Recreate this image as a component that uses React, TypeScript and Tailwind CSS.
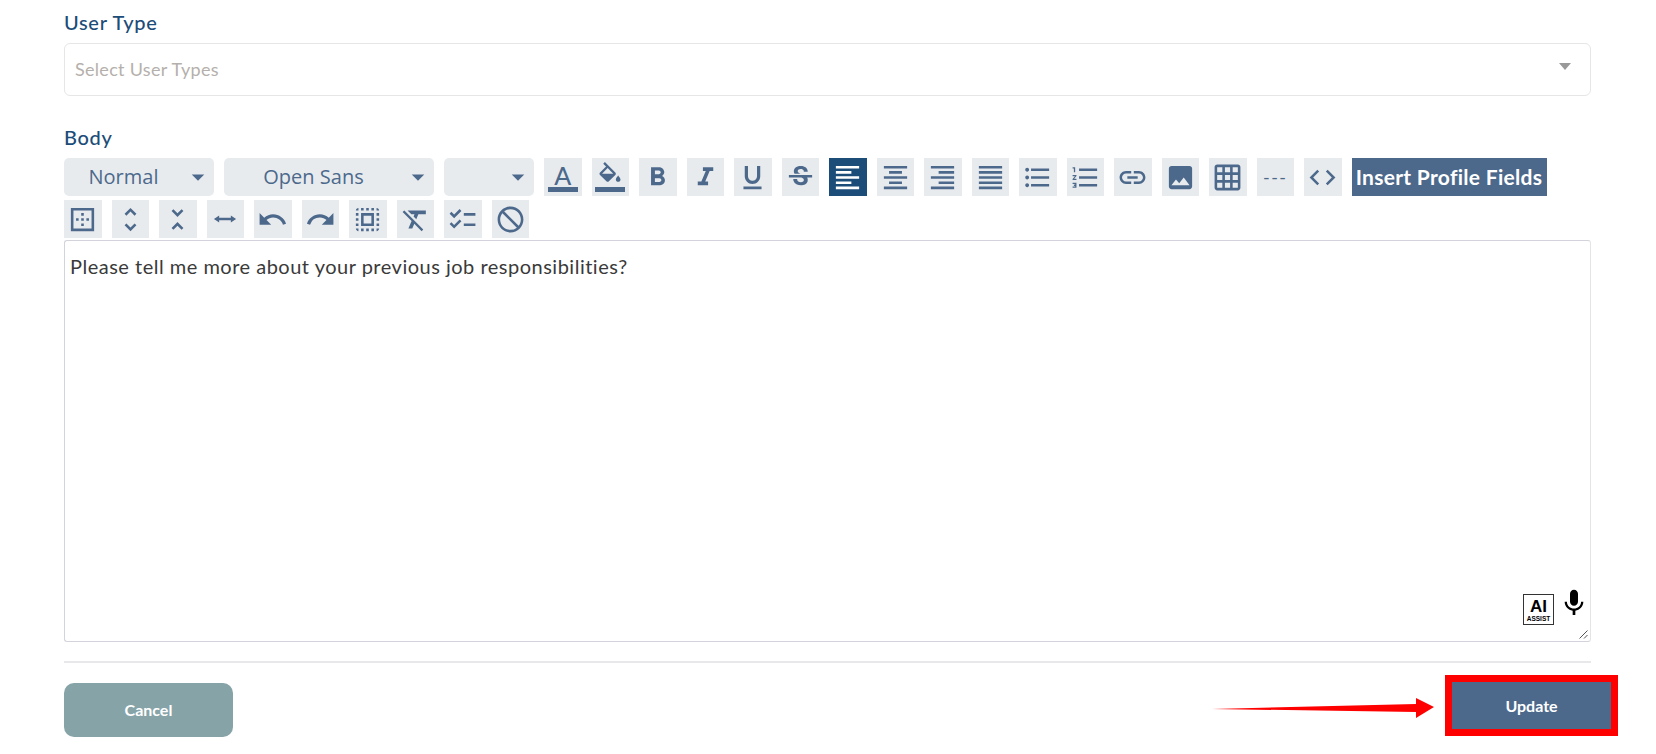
import React from 'react';
import {
    MdArrowDropDown,
    MdFormatBold,
    MdFormatItalic,
    MdFormatUnderlined,
    MdStrikethroughS,
    MdFormatAlignLeft,
    MdFormatAlignCenter,
    MdFormatAlignRight,
    MdFormatAlignJustify,
    MdFormatListBulleted,
    MdFormatListNumbered,
    MdLink,
    MdImage,
    MdGridOn,
    MdCode,
    MdBorderOuter,
    MdUnfoldMore,
    MdUnfoldLess,
    MdUndo,
    MdRedo,
    MdSelectAll,
    MdFormatClear,
    MdChecklist,
    MdDoNotDisturb,
    MdMic,
} from 'react-icons/md';

const font = 'font-["Lato","Noto_Sans",sans-serif]';

function ToolButton({ active, children }: { active?: boolean; children: React.ReactNode }) {
    return (
        <button
            className={
                active
                    ? 'w-[37.5px] h-[38px] bg-[#1c4c78] text-white flex items-center justify-center'
                    : 'w-[37.5px] h-[38px] bg-[#e8ebee] text-[#4c698c] flex items-center justify-center'
            }
        >
            {children}
        </button>
    );
}

function Dropdown({ label, width }: { label?: string; width: string }) {
    return (
        <div className={`${width} h-[38px] bg-[#e8ebee] rounded-[5px] flex items-center text-[#4c698c] text-[20px] font-["Open_Sans",sans-serif]`}>
            <span className="flex-1 text-center">{label}</span>
            <MdArrowDropDown className="w-[30px] h-[30px] mr-[1px] shrink-0" />
        </div>
    );
}

export default function App() {
    const icon = 'w-[31px] h-[31px]';

    return (
        <div className={`relative w-full h-[754px] overflow-hidden bg-white pl-[64px] pr-[65px] ${font}`}>
            <div className="mt-[10px] h-[26px] mb-[7px] leading-[24px] text-[20px] tracking-[0.7px] text-[#1c4c78] font-medium">User Type</div>
            <div className="h-[53px] border border-[#e6e6e6] rounded-[6px] flex items-center justify-between pl-[10px] pr-[19px]">
                <span className="text-[18px] tracking-[0.3px] text-[#b5b0ab]">Select User Types</span>
                <span className="w-0 h-0 border-x-[6px] border-t-[7px] border-x-transparent border-t-[#999] -mt-[6px]" />
            </div>

            <div className="mt-[29px] h-[26px] mb-[7px] leading-[24px] text-[20px] tracking-[0.7px] text-[#1c4c78] font-medium">Body</div>
            <div className="flex flex-wrap gap-x-[10px] gap-y-[4px]">
                <Dropdown label="Normal" width="w-[150px]" />
                <Dropdown label="Open Sans" width="w-[210px]" />
                <Dropdown width="w-[90px]" />
                <ToolButton>
                    <span className="h-[38px] flex flex-col items-center pt-[5px]">
                        <span className="font-medium text-[25px] leading-[24px]">A</span>
                        <span className="block w-[30px] h-[5px] bg-[#4c698c]" />
                    </span>
                </ToolButton>
                <ToolButton>
                    <span className="h-[38px] flex flex-col items-center pt-[4px]">
                        <svg viewBox="0 0 24 24" className="w-[28px] h-[28px]" fill="currentColor">
                            <path d="M16.56 8.94L7.62 0 6.21 1.41l2.38 2.38-5.15 5.15c-.59.59-.59 1.54 0 2.12l5.5 5.5c.29.29.68.44 1.06.44s.77-.15 1.06-.44l5.5-5.5c.59-.58.59-1.53 0-2.12zM5.21 10L10 5.21 14.79 10H5.21zM19 11.5s-2 2.17-2 3.5c0 1.1.9 2 2 2s2-.9 2-2c0-1.33-2-3.5-2-3.5z" />
                        </svg>
                        <span className="block w-[30px] h-[5px] bg-[#4c698c] -mt-[3px]" />
                    </span>
                </ToolButton>
                <ToolButton><MdFormatBold className={icon} /></ToolButton>
                <ToolButton><MdFormatItalic className={icon} /></ToolButton>
                <ToolButton><MdFormatUnderlined className={icon} /></ToolButton>
                <ToolButton><MdStrikethroughS className={icon} /></ToolButton>
                <ToolButton active><MdFormatAlignLeft className={icon} /></ToolButton>
                <ToolButton><MdFormatAlignCenter className={icon} /></ToolButton>
                <ToolButton><MdFormatAlignRight className={icon} /></ToolButton>
                <ToolButton><MdFormatAlignJustify className={icon} /></ToolButton>
                <ToolButton><MdFormatListBulleted className={icon} /></ToolButton>
                <ToolButton><MdFormatListNumbered className={icon} /></ToolButton>
                <ToolButton><MdLink className={icon} /></ToolButton>
                <ToolButton><MdImage className={icon} /></ToolButton>
                <ToolButton><MdGridOn className={icon} /></ToolButton>
                <ToolButton><span className="text-[18px] tracking-[1.5px]">---</span></ToolButton>
                <ToolButton><MdCode className={icon} /></ToolButton>
                <button className="w-[195px] h-[38px] bg-[#4c698c] text-white text-[21px] tracking-[0.3px] font-bold whitespace-nowrap">
                    Insert Profile Fields
                </button>
                <ToolButton><MdBorderOuter className={icon} /></ToolButton>
                <ToolButton><MdUnfoldMore className={icon} /></ToolButton>
                <ToolButton><MdUnfoldLess className={icon} /></ToolButton>
                <ToolButton>
                    <svg viewBox="0 0 24 24" className="w-[28px] h-[28px]" fill="currentColor">
                        <path d="M7 9 2.5 12 7 15v-2h10v2l4.5-3L17 9v2H7z" />
                    </svg>
                </ToolButton>
                <ToolButton><MdUndo className={icon} /></ToolButton>
                <ToolButton><MdRedo className={icon} /></ToolButton>
                <ToolButton><MdSelectAll className={icon} /></ToolButton>
                <ToolButton><MdFormatClear className={icon} /></ToolButton>
                <ToolButton><MdChecklist className={icon} /></ToolButton>
                <ToolButton><MdDoNotDisturb className={icon} /></ToolButton>
            </div>

            <div className="relative mt-[2px] h-[402px] border border-[#d3d3db] border-r-[#e4e4e8] rounded-[3px] px-[5px] pt-[11px]">
                <p className="text-[20px] tracking-[0.5px] leading-[28px] text-[#3a3a3a]">Please tell me more about your previous job responsibilities?</p>
                <div className="absolute left-[1458px] top-[353px] w-[31px] h-[31px] border border-[#333] flex flex-col items-center text-black font-['Liberation_Sans',sans-serif]">
                    <span className="text-[17px] leading-[17px] font-bold mt-[3px]">AI</span>
                    <span className="text-[6.5px] leading-[7px] font-bold">ASSIST</span>
                </div>
                <MdMic className="absolute left-[1493px] top-[346px] w-[32px] h-[32px] text-black" />
                <svg className="absolute right-[2px] bottom-[2px] w-[9px] h-[9px] text-[#555]" viewBox="0 0 9 9" fill="none" stroke="currentColor">
                    <path d="M0.5 8.5 8.5 0.5M5 8.5 8.5 5" />
                </svg>
            </div>

            <div className="mt-[19px] h-[2px] bg-[#e8e8ea]" />

            <div className="flex justify-between items-start pt-[12px] -mr-[27px]">
                <button className="mt-[8px] w-[169px] h-[54px] rounded-[10px] bg-[#86a3a8] text-white text-[16px] font-bold">Cancel</button>
                <div className="border-[7px] border-[#ff0000]">
                    <button className="block w-[159px] h-[47px] bg-[#4c698c] text-white text-[16px] font-bold">Update</button>
                </div>
            </div>

            <svg className="absolute left-[1210px] top-[695px] w-[226px] h-[24px]" viewBox="0 0 226 24" fill="#ff0000">
                <path d="M2 14 206 9 206 3 224 12 206 23 206 17z" />
            </svg>
        </div>
    );
}
